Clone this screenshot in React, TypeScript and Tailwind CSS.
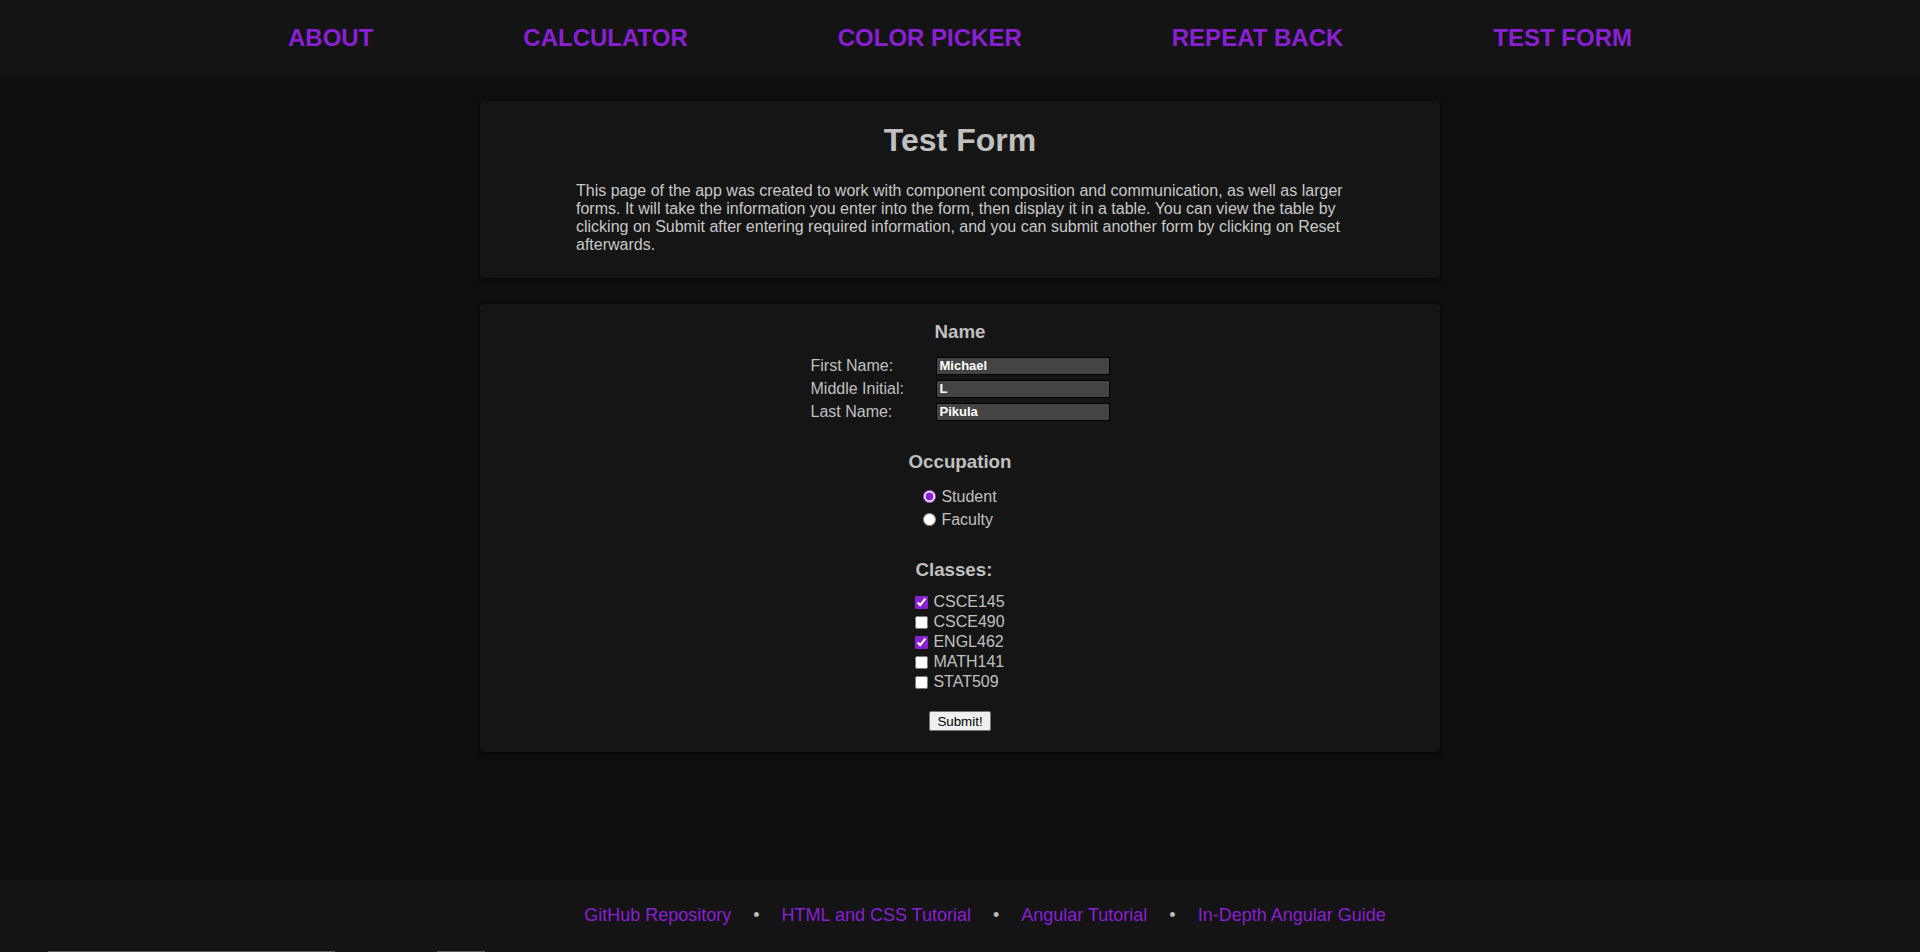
import React from 'react';

const navItems = ['About', 'Calculator', 'Color Picker', 'Repeat Back', 'Test Form'];
const classes = [
  { code: 'CSCE145', checked: true },
  { code: 'CSCE490', checked: false },
  { code: 'ENGL462', checked: true },
  { code: 'MATH141', checked: false },
  { code: 'STAT509', checked: false },
];
const footerLinks = ['GitHub Repository', 'HTML and CSS Tutorial', 'Angular Tutorial', 'In-Depth Angular Guide'];

const NameRow: React.FC<{ label: string; value: string }> = ({ label, value }) => (
  <>
    <div className="h-[23px] flex items-center text-[16px] text-[#c0c0c0]">{label}</div>
    <div className="h-[23px] flex items-center">
      <input
        readOnly
        value={value}
        className="w-[174px] h-[18px] bg-[#444444] border border-black px-[3px] text-[13px] font-bold text-white outline-none"
      />
    </div>
  </>
);

export default function App() {
  return (
    <div className="min-h-screen flex flex-col bg-[#0f0f0f] font-['Liberation_Sans',Arial,sans-serif]">
      <header className="h-[76px] bg-[#141414] flex items-center justify-center gap-[150px]">
        {navItems.map((item) => (
          <a key={item} className="text-[24px] font-bold uppercase text-[#8a1fd4] cursor-pointer">
            {item}
          </a>
        ))}
      </header>

      <main className="flex-1 flex flex-col items-center">
        <section className="w-[960px] mt-[25px] rounded-[5px] bg-[#151515] shadow-[0_2px_6px_rgba(0,0,0,0.6)] pt-[21px] pb-[24px]">
          <h1 className="text-center text-[32px] leading-[37px] font-bold text-[#c0c0c0]">Test Form</h1>
          <p className="w-[768px] mx-auto mt-[23px] text-[16px] leading-[18px] text-[#c8c8c8]">
            This page of the app was created to work with component composition and communication, as well as larger
            forms. It will take the information you enter into the form, then display it in a table. You can view the
            table by clicking on Submit after entering required information, and you can submit another form by clicking
            on Reset afterwards.
          </p>
        </section>

        <section className="w-[960px] mt-[26px] rounded-[5px] bg-[#151515] shadow-[0_2px_6px_rgba(0,0,0,0.6)] pt-[17px] pb-[21px] flex flex-col items-center">
          <h3 className="text-[18.72px] leading-[22px] font-bold text-[#c0c0c0]">Name</h3>
          <div className="mt-[11px] grid grid-cols-[125px_174px]">
            <NameRow label="First Name:" value="Michael" />
            <NameRow label="Middle Initial:" value="L" />
            <NameRow label="Last Name:" value="Pikula" />
          </div>

          <h3 className="mt-[28px] text-[18.72px] leading-[22px] font-bold text-[#c0c0c0]">Occupation</h3>
          <div className="mt-[12px] flex flex-col">
            {['Student', 'Faculty'].map((o) => (
              <label key={o} className="h-[23px] flex items-center gap-[5px] text-[16px] text-[#c0c0c0]">
                <input
                  type="radio"
                  name="occupation"
                  defaultChecked={o === 'Student'}
                  className="m-0 w-[13px] h-[13px] accent-[#8a1fd4]"
                />
                {o}
              </label>
            ))}
          </div>

          <div className="mt-[28px] flex flex-col">
            <h3 className="text-[18.72px] leading-[22px] font-bold text-[#c0c0c0]">Classes:</h3>
            <div className="mt-[11px] flex flex-col">
              {classes.map((c) => (
                <label key={c.code} className="h-[20px] flex items-center gap-[5px] text-[16px] text-[#c0c0c0]">
                  <input
                    type="checkbox"
                    defaultChecked={c.checked}
                    className="m-0 w-[13px] h-[13px] accent-[#8a1fd4]"
                  />
                  {c.code}
                </label>
              ))}
            </div>
          </div>

          <button className="mt-[19px] h-[20px] px-[7px] bg-[#efefef] border border-[#767676] rounded-[2px] text-[13.33px] text-black">
            Submit!
          </button>
        </section>
      </main>

      <footer className="bg-[#141414]">
        <div className="h-[71px] flex items-center justify-center pl-[50px]">
          {footerLinks.map((link, i) => (
            <React.Fragment key={link}>
              {i > 0 && <span className="mx-[22px] text-[18px] text-[#bbbbbb]">•</span>}
              <a className="text-[18px] text-[#8a1fd4] cursor-pointer">{link}</a>
            </React.Fragment>
          ))}
        </div>
        <div className="h-px flex">
          <div className="ml-[48px] w-[287px] bg-[#5a5a5a]" />
          <div className="ml-[102px] w-[48px] bg-[#5a5a5a]" />
        </div>
      </footer>
    </div>
  );
}
